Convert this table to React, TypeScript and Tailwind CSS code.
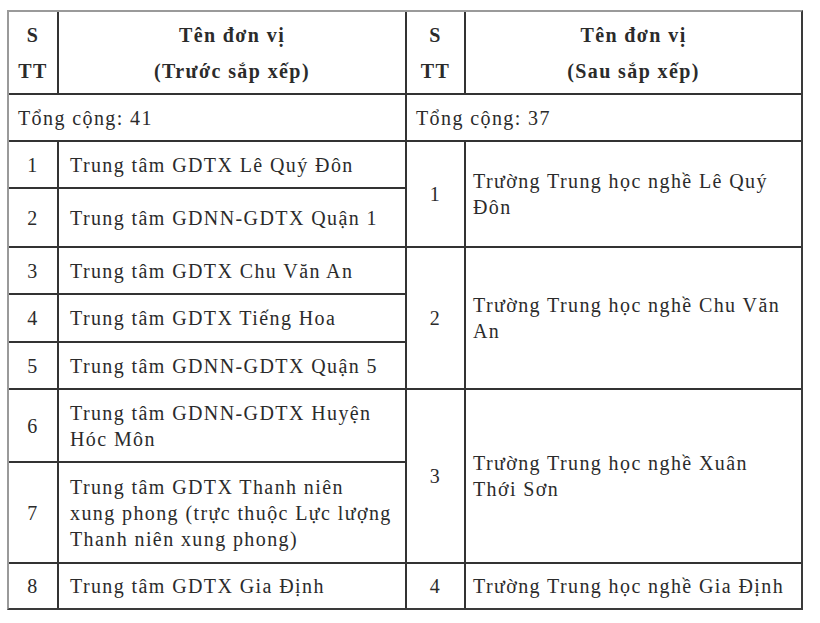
import React from "react";

const font = { fontFamily: '"Liberation Serif", "Times New Roman", serif' };

const Cell = ({ className = "", children }: { className?: string; children?: React.ReactNode }) => (
  <div className={"bg-white flex items-center " + className}>{children}</div>
);

export default function App() {
  return (
    <div className="w-[820px] h-[623px] bg-white pt-[10px] pl-[7px]" style={font}>
      <div className="w-[796px] border-t-2 border-l-2 border-t-[#9a9a9a] border-l-[#9a9a9a] border-r-2 border-b-2 border-r-[#3a3a3a] border-b-[#3a3a3a] bg-[#333]">
        <div className="grid grid-cols-[48px_346px_57px_335px] grid-rows-[81px_45px_45px_57px_45px_46px_45px_71px_99px_44px] gap-[2px] text-[20px] text-[#2b2b2b] leading-[26px] tracking-[1.4px]">
          {/* header */}
          <Cell className="flex-col justify-center font-bold leading-[36px]">
            <span>S</span>
            <span>TT</span>
          </Cell>
          <Cell className="flex-col justify-center font-bold leading-[36px]">
            <span>Tên đơn vị</span>
            <span>(Trước sắp xếp)</span>
          </Cell>
          <Cell className="flex-col justify-center font-bold leading-[36px]">
            <span>S</span>
            <span>TT</span>
          </Cell>
          <Cell className="flex-col justify-center font-bold leading-[36px]">
            <span>Tên đơn vị</span>
            <span>(Sau sắp xếp)</span>
          </Cell>

          {/* totals */}
          <Cell className="col-span-2 pl-[9px]">Tổng cộng: 41</Cell>
          <Cell className="col-span-2 pl-[9px]">Tổng cộng: 37</Cell>

          {/* row 1 */}
          <Cell className="justify-center">1</Cell>
          <Cell className="pl-[11px]">Trung tâm GDTX Lê Quý Đôn</Cell>
          <Cell className="row-span-2 justify-center">1</Cell>
          <Cell className="row-span-2 pl-[7px] pr-[4px]">
            <span>Trường Trung học nghề Lê Quý<br />Đôn</span>
          </Cell>

          {/* row 2 */}
          <Cell className="justify-center">2</Cell>
          <Cell className="pl-[11px]">Trung tâm GDNN-GDTX Quận 1</Cell>

          {/* row 3 */}
          <Cell className="justify-center">3</Cell>
          <Cell className="pl-[11px]">Trung tâm GDTX Chu Văn An</Cell>
          <Cell className="row-span-3 justify-center">2</Cell>
          <Cell className="row-span-3 pl-[7px] pr-[4px]">
            <span>Trường Trung học nghề Chu Văn<br />An</span>
          </Cell>

          {/* row 4 */}
          <Cell className="justify-center">4</Cell>
          <Cell className="pl-[11px]">Trung tâm GDTX Tiếng Hoa</Cell>

          {/* row 5 */}
          <Cell className="justify-center">5</Cell>
          <Cell className="pl-[11px]">Trung tâm GDNN-GDTX Quận 5</Cell>

          {/* row 6 */}
          <Cell className="justify-center">6</Cell>
          <Cell className="pl-[11px] pr-[4px]">
            <span>Trung tâm GDNN-GDTX Huyện<br />Hóc Môn</span>
          </Cell>
          <Cell className="row-span-2 justify-center">3</Cell>
          <Cell className="row-span-2 pl-[7px] pr-[4px]">
            <span>Trường Trung học nghề Xuân<br />Thới Sơn</span>
          </Cell>

          {/* row 7 */}
          <Cell className="justify-center">7</Cell>
          <Cell className="pl-[11px] pr-[4px]">
            <span>Trung tâm GDTX Thanh niên<br />xung phong (trực thuộc Lực lượng<br />Thanh niên xung phong)</span>
          </Cell>

          {/* row 8 */}
          <Cell className="justify-center">8</Cell>
          <Cell className="pl-[11px]">Trung tâm GDTX Gia Định</Cell>
          <Cell className="justify-center">4</Cell>
          <Cell className="pl-[7px]">Trường Trung học nghề Gia Định</Cell>
        </div>
      </div>
    </div>
  );
}
